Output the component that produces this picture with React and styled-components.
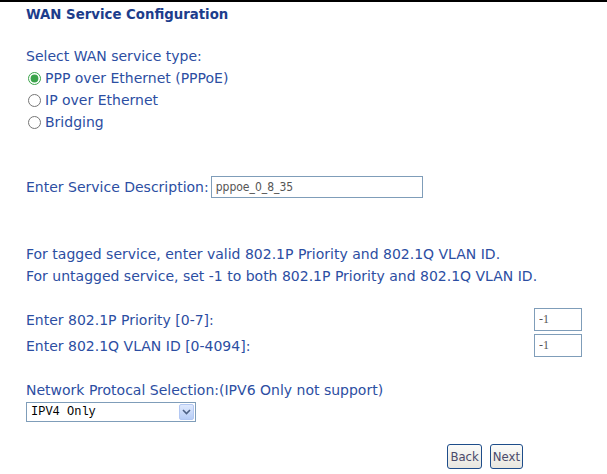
import styled, { createGlobalStyle } from "styled-components";

const Global = createGlobalStyle`
  html, body {
    margin: 0;
    background: #fff;
  }
  body {
    border-top: 2px solid #000;
    font-family: "DejaVu Sans", sans-serif;
    font-size: 14px;
    color: #2c4ea2;
  }
`;

const Page = styled.form`
  padding: 1px 0 0 26px;
  width: 556px;
`;

const Title = styled.div`
  font-weight: bold;
  color: #1c3d8c;
  font-size: 13.3px;
  height: 22px;
  line-height: 23px;
`;

const Section = styled.div`
  margin-top: ${p => p.$top || 0}px;
`;

const Line = styled.div`
  line-height: 22px;
  height: 22px;
`;

const RadioRow = styled.label`
  display: flex;
  align-items: center;
  height: 22px;
  padding-left: 2px;
  input {
    margin: 0 4px 0 0;
    width: 13px;
    height: 13px;
    accent-color: #3aa34a;
  }
`;

const DescRow = styled.div`
  display: flex;
  align-items: center;
  gap: 2px;
`;

const TextBox = styled.input`
  box-sizing: border-box;
  width: ${p => p.$w}px;
  height: 22px;
  border: 1px solid #7f9db9;
  padding: 0 4px;
  font-family: "DejaVu Sans Condensed", "DejaVu Sans", sans-serif;
  font-size: 12px;
  color: #555;
  outline: none;
`;

const VlanGrid = styled.div`
  display: grid;
  grid-template-columns: 1fr auto;
  row-gap: 3px;
  align-items: center;
`;

const SmallBox = styled(TextBox)`
  font-family: "Liberation Serif", serif;
  font-size: 12px;
  height: 23px;
`;

const SelectWrap = styled.div`
  position: relative;
  width: 170px;
  height: 20px;
  margin-top: 1px;
`;

const Select = styled.select`
  appearance: none;
  box-sizing: border-box;
  width: 100%;
  height: 100%;
  border: 1px solid #7f9db9;
  border-radius: 0;
  padding: 0 4px;
  font-family: "Liberation Mono", monospace;
  font-size: 12px;
  color: #000;
  background: #fff;
`;

const Arrow = styled.span`
  position: absolute;
  top: 2px;
  right: 2px;
  width: 15px;
  height: 16px;
  border-radius: 2px;
  background: linear-gradient(#dfe9fd, #b7cdf6);
  border: 1px solid #b3c8f3;
  box-sizing: border-box;
  display: flex;
  align-items: center;
  justify-content: center;
  pointer-events: none;
`;

const Buttons = styled.div`
  display: flex;
  justify-content: flex-end;
  gap: 8px;
  margin-top: 22px;
  padding-right: 59px;
`;

const Button = styled.button`
  height: 25px;
  padding: 0 2px;
  border: 1px solid #1e4d8a;
  border-radius: 3px;
  background: linear-gradient(#fbfbf9, #e8e6df);
  color: #4a4a6a;
  font-family: "DejaVu Sans Condensed", "DejaVu Sans", sans-serif;
  font-size: 13px;
`;

export default function App() {
  return (
    <>
      <Global />
      <Page onSubmit={e => e.preventDefault()}>
        <Title>WAN Service Configuration</Title>
        <Section $top={20}>
          <Line>Select WAN service type:</Line>
          <RadioRow><input type="radio" name="t" defaultChecked />PPP over Ethernet (PPPoE)</RadioRow>
          <RadioRow><input type="radio" name="t" />IP over Ethernet</RadioRow>
          <RadioRow><input type="radio" name="t" />Bridging</RadioRow>
        </Section>
        <Section $top={43}>
          <DescRow>
            Enter Service Description:
            <TextBox $w={212} defaultValue="pppoe_0_8_35" />
          </DescRow>
        </Section>
        <Section $top={45}>
          <Line>For tagged service, enter valid 802.1P Priority and 802.1Q VLAN ID.</Line>
          <Line>For untagged service, set -1 to both 802.1P Priority and 802.1Q VLAN ID.</Line>
        </Section>
        <Section $top={21}>
          <VlanGrid>
            <span>Enter 802.1P Priority [0-7]:</span>
            <SmallBox $w={48} defaultValue="-1" />
            <span>Enter 802.1Q VLAN ID [0-4094]:</span>
            <SmallBox $w={48} defaultValue="-1" />
          </VlanGrid>
        </Section>
        <Section $top={22}>
          <Line>Network Protocal Selection:(IPV6 Only not support)</Line>
          <SelectWrap>
            <Select defaultValue="v4">
              <option value="v4">IPV4 Only</option>
              <option value="v46">IPV4&amp;IPV6</option>
            </Select>
            <Arrow>
              <svg width="9" height="6" viewBox="0 0 9 6">
                <path d="M1 1l3.5 3.5L8 1" fill="none" stroke="#4d6185" strokeWidth="1.6" />
              </svg>
            </Arrow>
          </SelectWrap>
        </Section>
        <Buttons>
          <Button type="button">Back</Button>
          <Button type="button">Next</Button>
        </Buttons>
      </Page>
    </>
  );
}
